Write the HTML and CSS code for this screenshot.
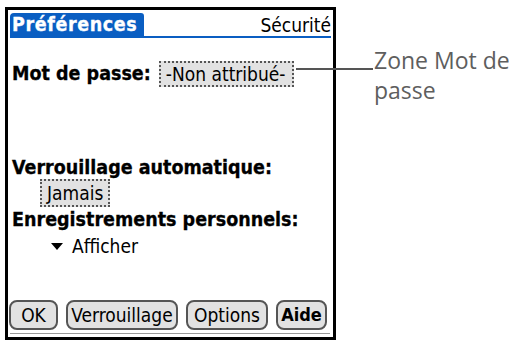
FILE: index.html
```html
<!DOCTYPE html>
<html lang="fr">
<head>
<meta charset="utf-8">
<link rel="stylesheet" href="styles.css">
</head>
<body>
<div class="page">
  <div class="screen">
    <div class="titlebar">
      <div class="tab">Préférences</div>
      <div class="panel">Sécurité</div>
    </div>
    <div class="body">
      <div class="row pw">
        <span class="label">Mot de passe:</span>
        <span class="field pwfield">-Non attribué-</span>
      </div>
      <div class="label auto">Verrouillage automatique:</div>
      <div class="indent1"><span class="field jamais">Jamais</span></div>
      <div class="label recs">Enregistrements personnels:</div>
      <div class="popup"><span class="tri"></span>Afficher</div>
    </div>
    <div class="buttons">
      <span class="btn b-ok">OK</span>
      <span class="btn b-lock">Verrouillage</span>
      <span class="btn b-opt">Options</span>
      <span class="btn b-help">Aide</span>
    </div>
    <div class="rule"></div>
  </div>
  <div class="callout">
    <span class="leader"></span>
    <span class="note"><span class="line">Zone Mot de</span><span class="line">passe</span></span>
  </div>
</div>
</body>
</html>
```
FILE: styles.css
```css
html, body {
  margin: 0;
  padding: 0;
  background: #fff;
}
.page {
  display: flex;
  align-items: flex-start;
  padding: 7px 0 0 5px;
  height: 340px;
  box-sizing: border-box;
  overflow: hidden;
}
.screen {
  width: 331px;
  height: 333px;
  box-sizing: border-box;
  border: 3px solid #000;
  display: flex;
  flex-direction: column;
  font-family: "DejaVu Sans Condensed", "DejaVu Sans", sans-serif;
  color: #000;
  flex-shrink: 0;
}
.titlebar {
  display: flex;
  align-items: flex-end;
  justify-content: space-between;
  height: 25px;
  margin: 1px 2px 0 2px;
  border-bottom: 2px solid #0a5ec2;
}
.tab {
  background: #0a5ec2;
  color: #fff;
  font-weight: bold;
  font-size: 19.5px;
  letter-spacing: 0.6px;
  -webkit-text-stroke: 0.3px #fff;
  line-height: 23px;
  height: 23px;
  padding: 0 7px 0 2px;
  border-radius: 4px 3px 0 0;
}
.panel {
  font-size: 19px;
  line-height: 22px;
  padding-right: 0;
}
.body {
  flex: 1;
  padding: 0 4px;
}
.row {
  display: flex;
  align-items: center;
}
.pw {
  margin-top: 23px;
}
.label {
  font-weight: bold;
  font-size: 19.5px;
  line-height: 22px;
  -webkit-text-stroke: 0.3px #000;
}
.field {
  display: inline-block;
  background: #e2e2e2;
  border: 2px dotted #555;
  font-size: 19px;
  line-height: 22px;
  box-sizing: border-box;
}
.pwfield {
  margin-left: 8px;
  width: 135px;
  padding: 0 0 0 5px;
}
.auto {
  margin-top: 70px;
}
.indent1 {
  padding-left: 28px;
  margin-top: 0;
  line-height: 0;
}
.jamais {
  width: 70px;
  height: 28px;
  line-height: 24px;
  padding: 0 0 0 5px;
}
.recs {
  margin-top: 2px;
}
.popup {
  padding-left: 39px;
  margin-top: 4px;
  font-size: 19px;
  line-height: 22px;
  display: flex;
  align-items: center;
}
.tri {
  width: 0;
  height: 0;
  border-left: 6.5px solid transparent;
  border-right: 6.5px solid transparent;
  border-top: 7px solid #000;
  margin-right: 9px;
}
.buttons {
  display: flex;
  gap: 8px;
  padding: 0 0 0 1px;
  margin-bottom: 3px;
}
.btn {
  display: inline-block;
  background: #e2e2e2;
  border: 2px solid #555;
  border-radius: 8px;
  font-size: 19px;
  line-height: 26px;
  text-align: center;
  box-sizing: border-box;
  height: 30px;
}
.b-ok { width: 49px; }
.b-lock { width: 112px; }
.b-opt { width: 82px; }
.b-help { width: 51px; font-weight: bold; font-size: 18px; }
.rule {
  height: 1px;
  background: #999;
  margin: 0 3px 3px 2px;
}
.callout {
  display: flex;
  align-items: flex-start;
  margin-left: -40px;
  margin-top: 45px;
}
.leader {
  width: 77px;
  height: 2px;
  background: #555;
  margin-top: 16px;
  flex-shrink: 0;
}
.note {
  display: flex;
  flex-direction: column;
  font-family: "Open Sans", "Liberation Sans", sans-serif;
  font-size: 23px;
  line-height: 30px;
  color: #5e5e5e;
  margin-left: 1px;
  white-space: nowrap;
  margin-top: -7px;
}
.line {
  display: block;
}
```
